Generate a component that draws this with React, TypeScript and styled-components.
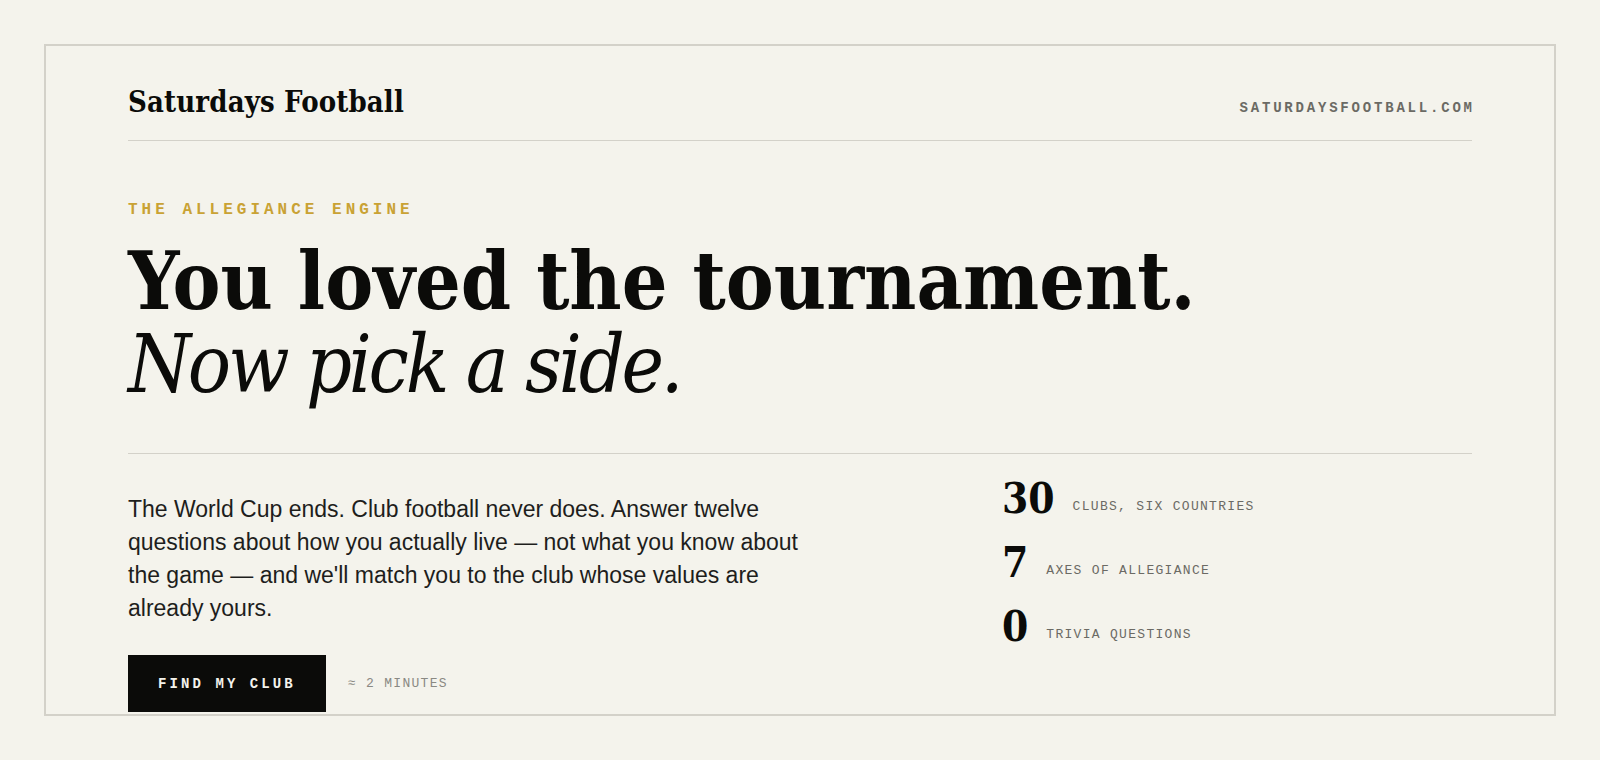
import React from "react";
import styled, { createGlobalStyle } from "styled-components";

const Global = createGlobalStyle`
  html, body { margin: 0; padding: 0; background: #f4f3ec; }
  body { padding: 44px; height: 760px; box-sizing: border-box; overflow: hidden; }
  * { box-sizing: border-box; }
`;

const serif = `"DejaVu Serif", "Liberation Serif", serif`;
const mono = `"Liberation Mono", "DejaVu Sans Mono", monospace`;
const sans = `"Liberation Sans", Arial, sans-serif`;

const Frame = styled.div`
  border: 2px solid #d3d1c9;
  height: 672px;
  overflow: hidden;
  padding: 0 82px;
  color: #0b0b09;
`;

const Header = styled.header`
  display: flex;
  justify-content: space-between;
  align-items: baseline;
  padding: 39px 0 20px;
  border-bottom: 1px solid #d3d1c9;
`;

const Logo = styled.div`
  font-family: ${serif};
  font-stretch: condensed;
  font-weight: 700;
  font-size: 29px;
  line-height: 1.2;
  letter-spacing: 0.005em;
`;

const Domain = styled.div`
  font-family: ${mono};
  font-weight: 700;
  font-size: 14px;
  letter-spacing: 0.2em;
  color: #6b6a64;
  margin-right: -0.2em;
`;

const Hero = styled.section`
  padding: 61px 0 47px;
  border-bottom: 1px solid #d3d1c9;
`;

const Eyebrow = styled.div`
  font-family: ${mono};
  font-weight: 700;
  font-size: 16px;
  line-height: 1;
  letter-spacing: 0.25em;
  color: #c9a234;
  margin-bottom: 22px;
`;

const Headline = styled.h1`
  margin: 0;
  font-family: ${serif};
  font-stretch: condensed;
  font-size: 80px;
  line-height: 1.04;
  font-weight: 700;
`;

const Line = styled.span<{ $italic?: boolean }>`
  display: block;
  font-style: ${(p) => (p.$italic ? "italic" : "normal")};
  font-weight: ${(p) => (p.$italic ? 400 : 700)};
  letter-spacing: ${(p) => (p.$italic ? "-0.04em" : "0")};
`;

const Bottom = styled.section`
  display: grid;
  grid-template-columns: minmax(0, 1fr) 470px;
  align-items: start;
  padding-top: 24px;
`;

const Intro = styled.div`
  padding-top: 15px;
`;

const Lead = styled.p`
  margin: 0 0 30px;
  max-width: 690px;
  font-family: ${sans};
  font-size: 23px;
  line-height: 1.435;
  color: #1e1e1c;
`;

const Actions = styled.div`
  display: flex;
  align-items: center;
  gap: 22px;
`;

const Button = styled.button`
  border: 0;
  border-radius: 0;
  background: #0b0b09;
  color: #f4f3ec;
  font-family: ${mono};
  font-weight: 700;
  font-size: 14px;
  letter-spacing: 0.22em;
  height: 57px;
  padding: 0 30px 0 30px;
  cursor: pointer;
`;

const Note = styled.span`
  font-family: ${mono};
  font-size: 13px;
  letter-spacing: 0.1em;
  color: #8a8983;
`;

const Stats = styled.div`
  display: flex;
  flex-direction: column;
  gap: 22px;
`;

const Stat = styled.div`
  display: flex;
  align-items: baseline;
  gap: 18px;
`;

const Num = styled.span`
  font-family: ${serif};
  font-stretch: condensed;
  font-weight: 700;
  font-size: 42px;
  line-height: 1;
`;

const Label = styled.span`
  font-family: ${mono};
  font-size: 13px;
  letter-spacing: 0.1em;
  color: #6b6a64;
  position: relative;
  top: -3px;
`;

const stats = [
  { n: "30", l: "CLUBS, SIX COUNTRIES" },
  { n: "7", l: "AXES OF ALLEGIANCE" },
  { n: "0", l: "TRIVIA QUESTIONS" },
];

export default function App() {
  return (
    <>
      <Global />
      <Frame>
        <Header>
          <Logo>Saturdays Football</Logo>
          <Domain>SATURDAYSFOOTBALL.COM</Domain>
        </Header>
        <Hero>
          <Eyebrow>THE ALLEGIANCE ENGINE</Eyebrow>
          <Headline>
            <Line>You loved the tournament.</Line>
            <Line $italic>Now pick a side.</Line>
          </Headline>
        </Hero>
        <Bottom>
          <Intro>
            <Lead>
              The World Cup ends. Club football never does. Answer twelve
              questions about how you actually live — not what you know about
              the game — and we'll match you to the club whose values are
              already yours.
            </Lead>
            <Actions>
              <Button>FIND MY CLUB</Button>
              <Note>≈ 2 MINUTES</Note>
            </Actions>
          </Intro>
          <Stats>
            {stats.map((s) => (
              <Stat key={s.n}>
                <Num>{s.n}</Num>
                <Label>{s.l}</Label>
              </Stat>
            ))}
          </Stats>
        </Bottom>
      </Frame>
    </>
  );
}
